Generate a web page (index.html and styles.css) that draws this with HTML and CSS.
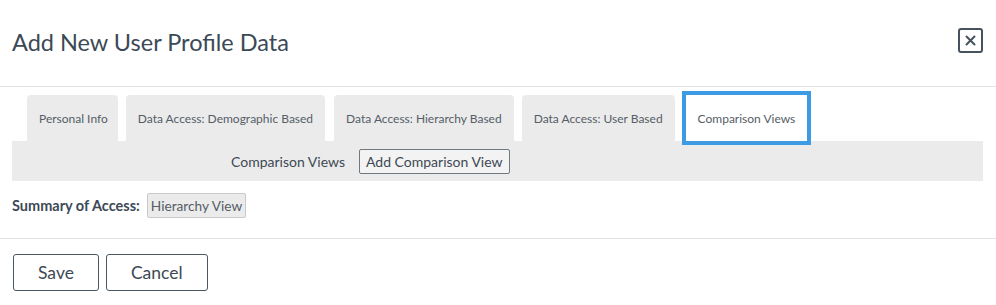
FILE: index.html
```html
<!DOCTYPE html>
<html lang="en">
<head>
    <meta charset="UTF-8">
    <title>Add New User Profile Data</title>
    <link rel="stylesheet" href="styles.css">
</head>
<body>
    <div class="modal">
        <div class="modal-header">
            <h1>Add New User Profile Data</h1>
            <button class="btn-close" type="button" aria-label="Close">
                <svg width="11" height="11" viewBox="0 0 11 11">
                    <path d="M1.5 1.5 L9.5 9.5 M9.5 1.5 L1.5 9.5" stroke="#46525d" stroke-width="2" stroke-linecap="round"/>
                </svg>
            </button>
        </div>

        <div class="modal-body">
            <ul class="tabs">
                <li class="tab">Personal Info</li>
                <li class="tab">Data Access: Demographic Based</li>
                <li class="tab">Data Access: Hierarchy Based</li>
                <li class="tab">Data Access: User Based</li>
                <li class="tab active">Comparison Views</li>
            </ul>

            <div class="tab-panel">
                <span class="panel-label">Comparison Views</span>
                <button class="btn-small" type="button">Add Comparison View</button>
            </div>

            <div class="summary">
                <strong>Summary of Access:</strong>
                <span class="badge">Hierarchy View</span>
            </div>
        </div>

        <div class="modal-footer">
            <button class="btn" type="button">Save</button>
            <button class="btn" type="button">Cancel</button>
        </div>
    </div>
</body>
</html>
```

FILE: styles.css
```css
:root {
    --text: #3d4955;
    --muted: #555d66;
    --gray: #ebebeb;
    --line: #e3e3e3;
    --focus: #3d9be3;
}

* {
    margin: 0;
    padding: 0;
    box-sizing: border-box;
}

body {
    font-family: 'Lato', sans-serif;
    color: var(--text);
    background: #fff;
}

.modal-header {
    height: 87px;
    display: flex;
    align-items: center;
    justify-content: space-between;
    padding: 0 13px 2px 12px;
    border-bottom: 1px solid var(--line);
}

.modal-header h1 {
    font-size: 23.5px;
    font-weight: 400;
    color: #3b4956;
}

.btn-close {
    width: 25px;
    height: 25px;
    border: 2px solid #46525d;
    border-radius: 3px;
    background: #fff;
    display: flex;
    align-items: center;
    justify-content: center;
    margin-top: -4px;
}

.modal-body {
    padding: 8px 13px 20px 12px;
    border-bottom: 1px solid var(--line);
}

.tabs {
    list-style: none;
    display: flex;
    gap: 8px;
    padding-left: 15px;
}

.tab {
    height: 46px;
    display: flex;
    align-items: center;
    padding: 0 12px;
    background: var(--gray);
    border-radius: 4px 4px 0 0;
    font-size: 12px;
    color: var(--muted);
}

.tab:first-child {
    padding-right: 10px;
}

.tab:nth-child(3) {
    margin-left: 1px;
}

.tab.active {
    background: #fff;
    border-radius: 0;
    margin-left: 3px;
    outline: 4px solid var(--focus);
    position: relative;
    z-index: 1;
}

.tab-panel {
    height: 40px;
    background: var(--gray);
    display: flex;
    align-items: center;
    gap: 14px;
    padding-left: 219px;
    font-size: 14px;
}

.btn-small {
    font-family: inherit;
    font-size: 14px;
    color: var(--text);
    background: #f3f3f3;
    border: 1px solid #707880;
    border-radius: 2px;
    height: 25px;
    padding: 0 6px;
}

.summary {
    display: flex;
    align-items: center;
    gap: 7px;
    margin-top: 12px;
    font-size: 14.5px;
}

.summary strong {
    font-weight: 700;
}

.badge {
    font-size: 13.7px;
    height: 25px;
    display: flex;
    align-items: center;
    padding: 0 3px;
    background: #ebebeb;
    border: 1px solid #c9c9c9;
    border-radius: 2px;
    color: var(--muted);
}

.modal-footer {
    display: flex;
    gap: 7px;
    padding: 15px 13px;
}

.btn {
    font-family: inherit;
    font-size: 17.5px;
    color: var(--text);
    background: #fff;
    border: 1px solid #4a5661;
    border-radius: 3px;
    height: 37px;
    padding: 0 24px;
}
```
